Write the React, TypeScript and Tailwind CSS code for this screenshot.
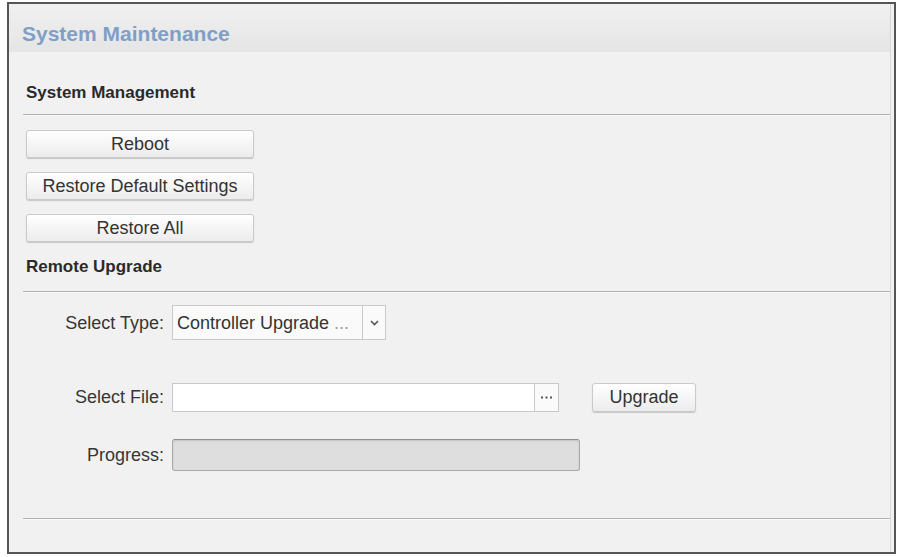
import type { ReactNode } from 'react'

const FONT = "font-['Liberation_Sans',Arial,Helvetica,sans-serif]"

function SectionTitle({ children, gap = 'mt-[13px]' }: { children: ReactNode; gap?: string }) {
  return (
    <div>
      <div className="pl-[17px] text-[17px] leading-[17px] font-bold text-[#2a2a2a]">{children}</div>
      <div className={'ml-[14px] h-[2px] border-t border-[#b0b0b0] bg-[#fbfbfb] ' + gap} />
    </div>
  )
}

function Btn({ children, className = '' }: { children: ReactNode; className?: string }) {
  return (
    <button
      className={
        'flex items-center justify-center rounded-[3px] border border-[#cacaca] bg-linear-to-b from-[#ffffff] to-[#ececec] text-[18px] leading-[18px] text-[#333] shadow-[0_1px_1px_rgba(0,0,0,0.18)] ' +
        className
      }
    >
      {children}
    </button>
  )
}

function Row({ label, children, className = '' }: { label: string; children: ReactNode; className?: string }) {
  return (
    <div className={'flex items-center gap-[8px] ' + className}>
      <div className="w-[155px] text-right text-[18px] leading-[18px] text-[#363636]">{label}</div>
      {children}
    </div>
  )
}

export default function App() {
  return (
    <div className={`w-[898px] h-[557px] bg-white pt-[2px] pl-[7px] ${FONT}`}>
      <div className="w-[889px] h-[552px] border-2 border-[#555] bg-[#f1f1f1]">
        <div className="h-full mr-[3px] border-r border-[#d6d6d6]">
          {/* Header */}
          <div className="h-[48px] bg-linear-to-b from-[#f0f0f0] to-[#e5e5e5] pl-[13px] pt-[19px]">
            <div className="text-[21px] leading-[21px] font-bold text-[#809fc7]">System Maintenance</div>
          </div>

          <div className="pt-[32px]">
            <SectionTitle>System Management</SectionTitle>

            <div className="mt-[14px] ml-[17px] flex flex-col gap-[14px]">
              <Btn className="w-[228px] h-[28px]">Reboot</Btn>
              <Btn className="w-[228px] h-[28px]">Restore Default Settings</Btn>
              <Btn className="w-[228px] h-[28px]">Restore All</Btn>
            </div>

            <div className="mt-[16px]">
              <SectionTitle gap="mt-[16px]">Remote Upgrade</SectionTitle>
            </div>

            <Row label="Select Type:" className="mt-[12px]">
              <div className="flex h-[35px] w-[214px] border border-[#c9c9c9] bg-[#fafafa]">
                <div className="flex flex-1 items-center pl-[4px] text-[18px] leading-[18px] text-[#333]">
                  Controller Upgrade <span className="ml-[5px] text-[#9a9a9a]">...</span>
                </div>
                <div className="flex w-[23px] items-center justify-center border-l border-[#c9c9c9]">
                  <svg width="9" height="6" viewBox="0 0 9 6">
                    <polyline points="1,1 4.5,4.5 8,1" fill="none" stroke="#555" strokeWidth="1.6" />
                  </svg>
                </div>
              </div>
            </Row>

            <Row label="Select File:" className="mt-[42px] h-[30px]">
              <div className="flex h-[29px] w-[387px] border border-[#c9c9c9] bg-white">
                <div className="flex-1" />
                <div className="flex w-[24px] items-center justify-center border-l border-[#c9c9c9] bg-[#fafafa]">
                  <svg width="11" height="3" viewBox="0 0 11 3">
                    <rect x="0" y="0.5" width="2" height="2" fill="#555" />
                    <rect x="4.5" y="0.5" width="2" height="2" fill="#555" />
                    <rect x="9" y="0.5" width="2" height="2" fill="#555" />
                  </svg>
                </div>
              </div>
              <Btn className="ml-[25px] w-[104px] h-[29px]">Upgrade</Btn>
            </Row>

            <Row label="Progress:" className="mt-[27px]">
              <div className="h-[32px] w-[408px] rounded-[3px] border border-[#a9a9a9] border-t-[#8e8e8e] bg-[#dedede] shadow-[inset_0_1px_2px_rgba(0,0,0,0.12)]" />
            </Row>

            <div className="ml-[14px] mt-[47px] h-[2px] border-t border-[#b0b0b0] bg-[#fbfbfb]" />
          </div>
        </div>
      </div>
    </div>
  )
}
